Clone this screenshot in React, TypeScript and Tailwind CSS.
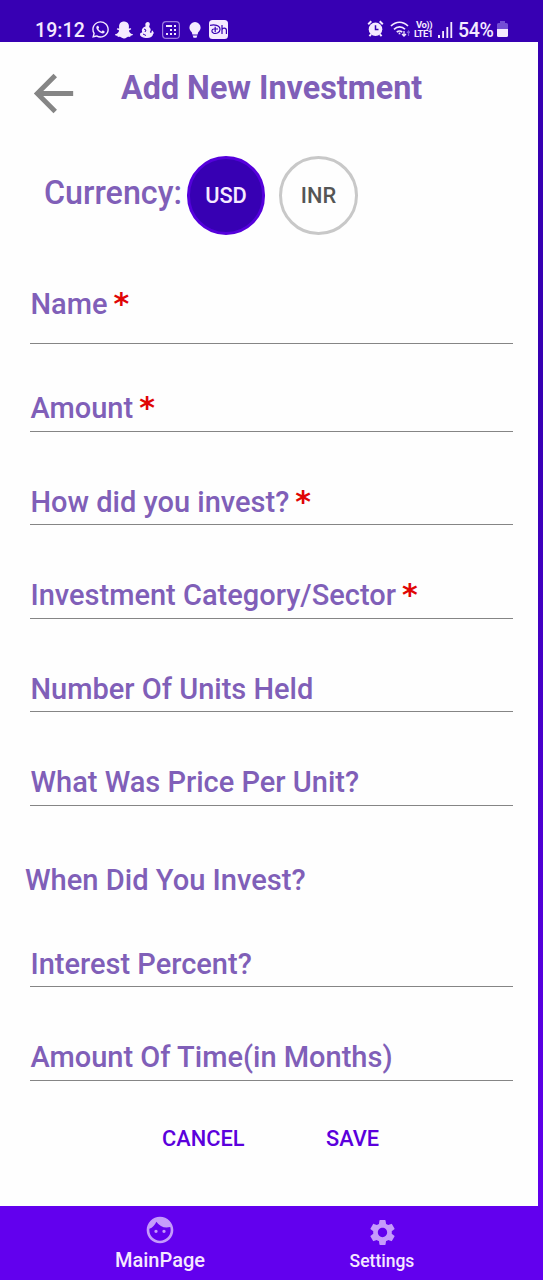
import React from "react";
import { FaWhatsapp, FaSnapchatGhost } from "react-icons/fa";
import { MdFace, MdSettings, MdArrowBack } from "react-icons/md";

type FieldProps = { label: string; required?: boolean; className: string };

function Field({ label, required, className }: FieldProps) {
  return (
    <label className={`ml-[30px] block w-[483px] border-b-[1.5px] border-[#858585] ${className}`}>
      <span className="flex pl-[0.5px] text-[29px] leading-[34px] font-medium whitespace-nowrap text-[#805fb8]">
        {label}
        {required && (
          <span className="ml-[6px] font-['DejaVu_Sans',sans-serif] text-[30px] leading-[34px] font-bold text-[#e00505]">*</span>
        )}
      </span>
    </label>
  );
}

function StatusBar() {
  return (
    <header className="flex h-[42px] shrink-0 items-end bg-[#3700b3] pl-[35px] text-[#f5eaff]">
      <span className="w-[56px] text-[19.5px] leading-[22px] font-medium tracking-[0.1px]">19:12</span>
      <FaWhatsapp className="mb-[3px] h-[19px] w-[19px]" />
      <FaSnapchatGhost className="mb-[3px] ml-[5px] h-[18px] w-[18px]" />
      <svg className="mb-[4px] ml-[7px] h-[16px] w-[14px]" viewBox="0 0 14 16" fill="currentColor">
        <path d="M5.3 2.8C5.3.8 6.4 0 7.8 0c1.5 0 2.1 1 2 2.4-.1 1-.9 1.7-.5 2.5.5.9 1.5 1.7 1.4 3 0 .8-.4 1.5-.9 2l1 1c.8-.2 1-1 .8-2l.9-.5 1.4 2.7-.8 1C12.8 14.6 10.3 16 7 16 3.2 16 0 14.6 0 12.5c0-1.4 1-2.2 2.2-2L1.8 8c.6-1.8 1.8-3.1 3.6-3.5.3-.3.1-.9-.1-1.7Z" />
        <path d="m4 7 2 1-1 2M3 12l3 1.5" stroke="#3700b3" fill="none" />
      </svg>
      <svg className="mb-[3px] ml-[8px] h-[18px] w-[18px]" viewBox="0 0 18 18" fill="none">
        <rect x=".6" y=".6" width="16.8" height="16.8" rx="3.5" stroke="#9b79df" strokeWidth="1.2" />
        <path d="M4 5h6M12 5h2M8 9h2M12 9h2M4 13h2M8 13h2M12 13h2" stroke="#f5eaff" strokeWidth="2" />
      </svg>
      <svg className="mb-[4px] ml-[9px] h-[16px] w-[12px]" viewBox="0 0 12 16" fill="currentColor">
        <path d="M6 0a5.6 5.6 0 0 0-5.6 5.6c0 2 1 3.4 2.4 4.6l.6 2.4h5.2l.6-2.4c1.4-1.2 2.4-2.6 2.4-4.6A5.6 5.6 0 0 0 6 0Z" />
        <path d="M3.7 13.5h4.6l-.8 2.2h-3z" />
      </svg>
      <span className="mb-[3px] ml-[8px] flex h-[19px] w-[19px] items-center justify-center rounded-[3.5px] bg-[#f5eaff] text-[#3700b3]">
        <svg className="h-[11px] w-[18px]" viewBox="0 0 18 11" fill="none" stroke="currentColor" strokeWidth="1.2">
          <path d="M0 1.5c4-1.3 10-.5 10 4 0 3-3.5 4.5-6.2 3.8C1 8.2 1.5 5 4 5h4M5.2 2.8v5.4M12 1v9M12 6c.3-2.5 4.4-2.5 4.4.3V10" />
        </svg>
      </span>
      <svg className="mb-[5px] ml-[139px] h-[17px] w-[17px]" viewBox="0 0 17 17" fill="currentColor">
        <circle cx="8.5" cy="9.2" r="6.8" />
        <path d="M1.2 4.2 4.3 1.3M12.7 1.3l3.1 2.9M4.2 14.2l-1.8 2M12.8 14.2l1.8 2" stroke="currentColor" strokeWidth="2" />
        <path d="M8.5 5.3v4.2h3" stroke="#3700b3" strokeWidth="1.5" fill="none" />
      </svg>
      <svg className="mb-[4px] ml-[6px] h-[18px] w-[20px]" viewBox="0 0 20 18" fill="none" stroke="currentColor" strokeWidth="1.7">
        <path d="M1 6c5-5 12-5 17 0M4 9.3c3.3-3.3 8-3.3 11 0M6.8 12.2c1.6-1.6 4-1.6 5.4 0" />
        <path d="M9.5 12.5v1.8" />
        <path d="M14 11v5m-2-2 2 2 2-2" strokeWidth="1.3" />
        <path d="M18.5 16v-5m-1.5 2 1.5-2 1.5 2" strokeWidth="1.2" stroke="#8060db" />
      </svg>
      <span className="mb-[4px] ml-[4px] flex w-[21px] flex-col text-[9.5px] leading-[9px] font-bold">
        <span className="pl-[2px] tracking-[-0.5px]">Vo))</span>
        <span className="tracking-[-0.5px]">LTE1</span>
      </span>
      <svg className="mb-[4px] ml-[3px] h-[16px] w-[15px]" viewBox="0 0 15 16" fill="currentColor">
        <path d="M0 13h2v3H0zM4.2 9h1.8v7H4.2zM8.4 5h1.8v11H8.4zM12.4 0h1.8v16h-1.8z" />
      </svg>
      <span className="ml-[5px] w-[39px] text-[19.5px] leading-[22px] font-medium tracking-[-0.3px]">54%</span>
      <svg className="mb-[5px] h-[16px] w-[11px]" viewBox="0 0 11 16">
        <path d="M3 0h5v2h1.5Q11 2 11 3.5V8H0V3.5Q0 2 1.5 2H3z" fill="#744fd5" />
        <path d="M0 8h11v6.5q0 1.5-1.5 1.5h-8Q0 16 0 14.5z" fill="#f5eaff" />
      </svg>
    </header>
  );
}

export default function App() {
  return (
    <div className="flex h-[1280px] w-[543px] flex-col overflow-hidden bg-white font-['Roboto',sans-serif]">
      <StatusBar />
      <div className="flex h-[1164px] shrink-0 bg-gradient-to-b from-[#3700b3] from-30% to-[#6200ee] pr-[5px]">
        <main className="flex w-[538px] flex-col bg-[#fefefe]">
          <div className="flex h-[114px] shrink-0 pl-[24px]">
            <button aria-label="Back" className="mt-[22px] h-[59px] w-[59px] text-[#858585]">
              <MdArrowBack className="h-[59px] w-[59px]" />
            </button>
            <h1 className="mt-[27px] ml-[38px] text-[32.3px] leading-[38px] font-bold whitespace-nowrap text-[#805fb8]">Add New Investment</h1>
          </div>
          <div className="flex h-[131px] shrink-0 pl-[44px]">
            <span className="mt-[18px] w-[143px] text-[32.3px] leading-[38px] font-medium whitespace-nowrap text-[#805fb8]">Currency:</span>
            <button className="h-[79px] w-[78px] rounded-full border-[3px] border-[#5500dc] bg-[#3700b3] pt-[2px] text-[21.8px] font-medium text-[#f5eaff]">USD</button>
            <button className="ml-[14px] h-[79px] w-[79px] rounded-full border-[3px] border-[#c8c8c8] pt-[2px] text-[21.8px] font-medium text-[#555]">INR</button>
          </div>
          <form className="flex flex-col">
            <Field label="Name" required className="h-[57px]" />
            <Field label="Amount" required className="mt-[47px] h-[41px]" />
            <Field label="How did you invest?" required className="mt-[53px] h-[40px]" />
            <Field label="Investment Category/Sector" required className="mt-[53px] h-[41px]" />
            <Field label="Number Of Units Held" className="mt-[53px] h-[40px]" />
            <Field label="What Was Price Per Unit?" className="mt-[53px] h-[41px]" />
            <div className="mt-[57px] ml-[25px] h-[34px] text-[29.1px] leading-[34px] font-medium text-[#805fb8]">When Did You Invest?</div>
            <Field label="Interest Percent?" className="mt-[50px] h-[40px]" />
            <Field label="Amount Of Time(in Months)" className="mt-[53px] h-[41px]" />
            <div className="mt-[44px] ml-[162px] flex text-[21.8px] leading-[28px] font-medium text-[#5b00dc]">
              <button type="button" className="w-[164px] text-left">CANCEL</button>
              <button type="button">SAVE</button>
            </div>
          </form>
        </main>
      </div>
      <nav className="flex grow bg-[#6200ee] pl-[100px] text-[#f6e8ff]">
        <a className="flex w-[120px] flex-col items-center pt-[8px]">
          <MdFace className="h-[32px] w-[32px] text-[#c59bfb]" />
          <span className="mt-[1px] text-[20px] leading-[26px] font-medium">MainPage</span>
        </a>
        <a className="ml-[102px] flex w-[120px] flex-col items-center pt-[11px]">
          <MdSettings className="h-[31px] w-[31px] text-[#c59bfb]" />
          <span className="text-[17.5px] leading-[26px] font-medium">Settings</span>
        </a>
      </nav>
    </div>
  );
}
